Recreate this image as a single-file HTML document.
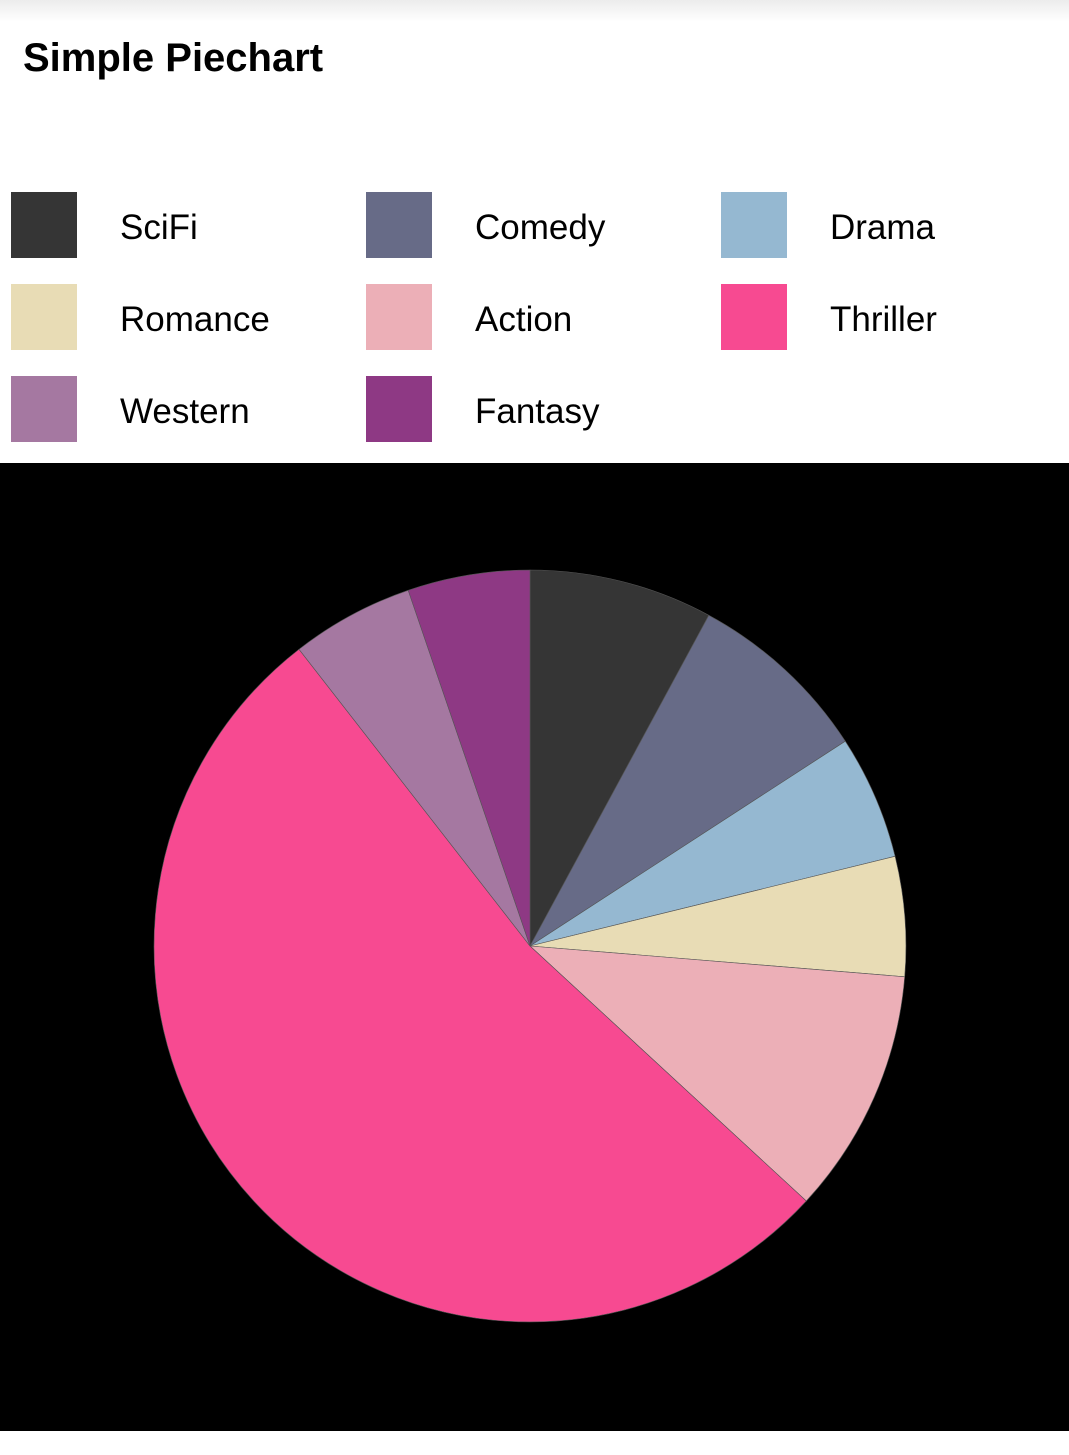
<!DOCTYPE html>
<html><head><meta charset="utf-8"><style>
html,body{margin:0;padding:0;width:1069px;height:1455px;background:#fff;overflow:hidden;font-family:"Liberation Sans",Arial,sans-serif}
.top{position:absolute;left:0;top:0;width:1069px;height:22px;background:linear-gradient(#ececec,#fff)}
h1{position:absolute;left:23px;top:36px;margin:0;font-size:40px;font-weight:bold;color:#000}
.sq{position:absolute;width:66px;height:66px}
.lb{position:absolute;font-size:35px;color:#000;line-height:40px}
.chart{position:absolute;left:0;top:463px;width:1069px;height:968px;background:#000}
</style></head><body>
<div class="top"></div>
<h1>Simple Piechart</h1>
<div class="sq" style="left:11px;top:192px;background:#353535"></div><div class="lb" style="left:120px;top:208px">SciFi</div>
<div class="sq" style="left:366px;top:192px;background:#676b87"></div><div class="lb" style="left:475px;top:208px">Comedy</div>
<div class="sq" style="left:721px;top:192px;background:#95b8d1"></div><div class="lb" style="left:830px;top:208px">Drama</div>
<div class="sq" style="left:11px;top:284px;background:#e8dcb5"></div><div class="lb" style="left:120px;top:300px">Romance</div>
<div class="sq" style="left:366px;top:284px;background:#ecafb7"></div><div class="lb" style="left:475px;top:300px">Action</div>
<div class="sq" style="left:721px;top:284px;background:#f74a91"></div><div class="lb" style="left:830px;top:300px">Thriller</div>
<div class="sq" style="left:11px;top:376px;background:#a578a1"></div><div class="lb" style="left:120px;top:392px">Western</div>
<div class="sq" style="left:366px;top:376px;background:#8e3984"></div><div class="lb" style="left:475px;top:392px">Fantasy</div>
<div class="chart">
<svg width="1069" height="968" viewBox="0 463 1069 968" style="display:block">
<g stroke="#555" stroke-width="0.6">
<path d="M530 946 L530 570 A376 376 0 0 1 708.8 615.3 Z" fill="#353535"/>
<path d="M530 946 L708.8 615.3 A376 376 0 0 1 845.3 741.2 Z" fill="#676b87"/>
<path d="M530 946 L845.3 741.2 A376 376 0 0 1 895.1 856.3 Z" fill="#95b8d1"/>
<path d="M530 946 L895.1 856.3 A376 376 0 0 1 904.7 976.8 Z" fill="#e8dcb5"/>
<path d="M530 946 L904.7 976.8 A376 376 0 0 1 806.3 1201 Z" fill="#ecafb7"/>
<path d="M530 946 L806.3 1201 A376 376 0 1 1 299 649.3 Z" fill="#f74a91"/>
<path d="M530 946 L299 649.3 A376 376 0 0 1 408.2 590.3 Z" fill="#a578a1"/>
<path d="M530 946 L408.2 590.3 A376 376 0 0 1 530 570 Z" fill="#8e3984"/>
</g>
</svg>
</div>
</body></html>
